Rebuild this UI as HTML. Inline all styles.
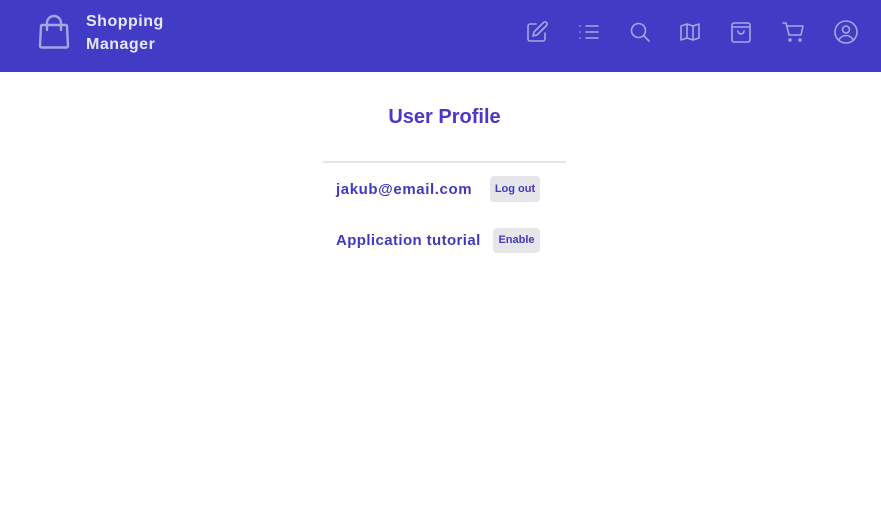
<!DOCTYPE html>
<html><head><meta charset="utf-8"><style>
*{margin:0;padding:0;box-sizing:border-box}
body{width:881px;height:529px;background:#fff;font-family:"Liberation Sans",sans-serif;position:relative;overflow:hidden}
.hdr{position:absolute;left:0;top:0;width:881px;height:72px;background:#413bc6}
.logo{position:absolute;left:37px;top:14px}
.brand{position:absolute;left:86px;top:10px;color:#e6e6fa;font-weight:bold;font-size:16px;line-height:23px;letter-spacing:0.5px}
.ic{position:absolute;top:20px;width:24px;height:24px}
.ic svg{width:24px;height:24px;fill:none;stroke:#a4a7e2;stroke-width:1.6;stroke-linecap:round;stroke-linejoin:round}
h1{position:absolute;left:0;width:889px;top:106px;text-align:center;color:#4f35c9;font-size:20px;font-weight:bold}
.hr{position:absolute;left:323px;top:161px;width:243px;height:2px;background:#e5e5ea}
.t{position:absolute;color:#4338c0;font-weight:bold;font-size:15px}
.b{position:absolute;background:#e5e5ea;border-radius:4px;color:#4338c0;font-weight:bold;font-size:11px;text-align:center}
</style></head><body>
<div class="hdr">
<svg class="logo" width="34" height="36" viewBox="0 0 34 36" fill="none" stroke="#a4a7e2" stroke-width="2.4" stroke-linecap="round" stroke-linejoin="round"><path d="M5 11h24a1 1 0 0 1 1 1l1 20a1.5 1.5 0 0 1-1.5 1.5h-25A1.5 1.5 0 0 1 3 32l1-20a1 1 0 0 1 1-1z"/><path d="M10 16V9a7 7 0 0 1 14 0v7"/></svg>
<div class="brand">Shopping<br>Manager</div>
<div class="ic" style="left:525px"><svg viewBox="0 0 24 24"><path d="M11 4H5a2 2 0 0 0-2 2v13a2 2 0 0 0 2 2h13a2 2 0 0 0 2-2v-6"/><path d="M18.5 2.5a2.1 2.1 0 0 1 3 3L12 15l-4 1 1-4z"/></svg></div>
<div class="ic" style="left:577px"><svg viewBox="0 0 24 24"><path d="M9 6h12M9 12h12M9 18h12M3 6h.01M3 12h.01M3 18h.01"/></svg></div>
<div class="ic" style="left:628px"><svg viewBox="0 0 24 24"><circle cx="10.5" cy="10.5" r="7"/><path d="M21 21l-5.5-5.5"/></svg></div>
<div class="ic" style="left:678px"><svg viewBox="0 0 24 24"><path d="M3 6l6-2 6 2 6-2v14l-6 2-6-2-6 2z"/><path d="M9 4v14M15 6v14"/></svg></div>
<div class="ic" style="left:729px"><svg viewBox="0 0 24 24"><rect x="3" y="3" width="18" height="19" rx="2"/><path d="M3 7h18"/><path d="M9 11a3 3 0 0 0 6 0"/></svg></div>
<div class="ic" style="left:781px"><svg viewBox="0 0 24 24"><path d="M2 3h3l3 12h12l2-9H6.5"/><circle cx="9" cy="20" r="1"/><circle cx="19" cy="20" r="1"/></svg></div>
<div class="ic" style="left:834px"><svg viewBox="0 0 24 24"><circle cx="12" cy="12" r="11"/><circle cx="12" cy="9.5" r="3.5"/><path d="M5 19.5c2-3 4.5-4 7-4s5 1 7 4"/></svg></div>
</div>
<h1>User Profile</h1>
<div class="hr"></div>
<div class="t" style="left:336px;top:181px;letter-spacing:0.6px">jakub@email.com</div>
<div class="b" style="left:490px;top:176px;width:50px;height:26px;line-height:26px">Log out</div>
<div class="t" style="left:336px;top:232px;letter-spacing:0.4px">Application tutorial</div>
<div class="b" style="left:493px;top:228px;width:47px;height:25px;line-height:25px">Enable</div>
</body></html>
